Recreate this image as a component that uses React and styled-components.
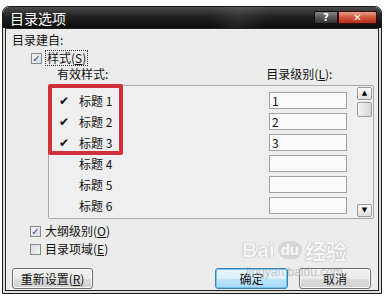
import React from "react";
import styled, { createGlobalStyle } from "styled-components";

const GlobalStyle = createGlobalStyle`
  body {
    margin: 0;
    background: #fff;
    font-family: "Noto Sans CJK SC", "Noto Sans", sans-serif;
    font-size: 12px;
    color: #111;
  }
`;

const levels = [
  { name: "标题 1", checked: true, value: "1" },
  { name: "标题 2", checked: true, value: "2" },
  { name: "标题 3", checked: true, value: "3" },
  { name: "标题 4", checked: false, value: "" },
  { name: "标题 5", checked: false, value: "" },
  { name: "标题 6", checked: false, value: "" },
];

export default function App() {
  return (
    <>
      <GlobalStyle />
      <Window>
        <TitleBar>
          <Title>目录选项</Title>
          <CaptionButtons>
            <HelpButton>?</HelpButton>
            <CloseButton>✕</CloseButton>
          </CaptionButtons>
        </TitleBar>
        <Body>
          <Label>目录建自:</Label>
          <CheckRow $indent={25} $top={4}>
            <Box $checked>✓</Box>
            <FocusText>
              样式(<u>S</u>)
            </FocusText>
          </CheckRow>
          <HeaderRow>
            <span>有效样式:</span>
            <span>
              目录级别(<u>L</u>):
            </span>
          </HeaderRow>
          <ListBox>
            <Rows>
              {levels.map((l) => (
                <Row key={l.name}>
                  <Tick>{l.checked ? "✔" : ""}</Tick>
                  <Name>{l.name}</Name>
                  <LevelInput>{l.value}</LevelInput>
                </Row>
              ))}
            </Rows>
            <ScrollBar>
              <ArrowButton>▲</ArrowButton>
              <Thumb />
              <Track />
              <ArrowButton>▼</ArrowButton>
            </ScrollBar>
            <Highlight />
          </ListBox>
          <CheckRow $indent={24} $top={5}>
            <Box $checked>✓</Box>
            <span>
              大纲级别(<u>O</u>)
            </span>
          </CheckRow>
          <CheckRow $indent={24} $top={4}>
            <Box />
            <span>
              目录项域(<u>E</u>)
            </span>
          </CheckRow>
          <ButtonRow>
            <Button $width={81}>
              重新设置(<u>R</u>)
            </Button>
            <Spacer />
            <Button $width={73} $default>
              确定
            </Button>
            <Button $width={72}>取消</Button>
          </ButtonRow>
          <Watermark>
            <Brand>
              Bai<Paw>du</Paw>经验
            </Brand>
            <Url>jingyan.baidu.com</Url>
          </Watermark>
        </Body>
      </Window>
    </>
  );
}

const Window = styled.div`
  margin: 6px 0 0 2px;
  width: 380px;
  height: 288px;
  box-sizing: border-box;
  border: 1px solid #1a1a1a;
  border-radius: 7px 7px 0 0;
  overflow: hidden;
  background: #dcdcdc;
  display: flex;
  flex-direction: column;
  padding: 0 2px 2px;
`;

const TitleBar = styled.div`
  height: 21px;
  margin: 0 -2px;
  flex: none;
  display: flex;
  align-items: flex-start;
  background:
    linear-gradient(100deg, transparent 55%, rgba(255, 255, 255, 0.08) 62%, transparent 70%),
    linear-gradient(180deg, #4a4a4a 0%, #222 45%, #0c0c0c 100%);
`;

const Title = styled.div`
  flex: 1;
  color: #fff;
  font-size: 14px;
  line-height: 21px;
  padding-left: 7px;
  margin-top: 1px;
`;

const CaptionButtons = styled.div`
  display: flex;
  margin: 4px 4px 0 0;
`;

const HelpButton = styled.div`
  width: 24px;
  height: 13px;
  box-sizing: border-box;
  border: 1px solid #111;
  border-radius: 2px 0 0 2px;
  background: linear-gradient(180deg, #8a8a8a 0%, #555 50%, #333 100%);
  color: #fff;
  font: bold 10px/11px "DejaVu Sans", sans-serif;
  text-align: center;
`;

const CloseButton = styled.div`
  width: 39px;
  height: 13px;
  box-sizing: border-box;
  border: 1px solid #3a0c05;
  border-radius: 0 2px 2px 0;
  background: linear-gradient(180deg, #eba08f 0%, #d2543c 50%, #b3301b 100%);
  color: #fff;
  font: bold 10px/11px "DejaVu Sans", sans-serif;
  text-align: center;
`;

const Body = styled.div`
  position: relative;
  flex: 1;
  border: 1px solid #222;
  background: #ececec;
  display: flex;
  flex-direction: column;
`;

const Label = styled.div`
  line-height: 14px;
  margin: 4px 0 0 6px;
`;

const CheckRow = styled.div`
  display: flex;
  align-items: center;
  gap: 4px;
  line-height: 14px;
  margin: ${(p) => p.$top}px 0 0 ${(p) => p.$indent}px;
`;

const Box = styled.div`
  width: 11px;
  height: 11px;
  box-sizing: border-box;
  border: 1px solid #8a8a8a;
  background: ${(p) =>
    p.$checked
      ? "linear-gradient(135deg, #f4f4f4, #d8dde4)"
      : "linear-gradient(135deg, #dadada, #f6f6f6)"};
  color: #2a4f93;
  font: bold 10px/9px "DejaVu Sans", sans-serif;
  text-align: center;
`;

const FocusText = styled.span`
  outline: 1px dotted #333;
  padding: 0 1px;
`;

const HeaderRow = styled.div`
  display: flex;
  line-height: 14px;
  margin: 2px 0 0 51px;
  span:last-child {
    margin-left: 158px;
  }
`;

const ListBox = styled.div`
  position: relative;
  display: flex;
  width: 326px;
  height: 134px;
  box-sizing: border-box;
  margin: 4px 0 0 42px;
  border: 1px solid #a8a8a8;
  border-radius: 2px;
  background: #efefef;
`;

const Rows = styled.div`
  flex: 1;
  display: flex;
  flex-direction: column;
  gap: 4px;
  padding-top: 6px;
`;

const Row = styled.div`
  display: flex;
  align-items: center;
  height: 17px;
  padding-left: 10px;
`;

const Tick = styled.span`
  width: 20px;
  font: bold 12px "DejaVu Sans", sans-serif;
`;

const Name = styled.span`
  flex: 1;
`;

const LevelInput = styled.div`
  width: 78px;
  height: 17px;
  box-sizing: border-box;
  margin-right: 10px;
  border: 1px solid #a0a0a0;
  background: #fafafa;
  padding-left: 2px;
  line-height: 15px;
`;

const ScrollBar = styled.div`
  width: 15px;
  margin: 1px 1px 1px 0;
  display: flex;
  flex-direction: column;
`;

const ArrowButton = styled.div`
  height: 13px;
  box-sizing: border-box;
  border: 1px solid #9a9a9a;
  border-radius: 2px;
  background: linear-gradient(180deg, #fdfdfd, #dedede);
  font: 7px/11px "DejaVu Sans", sans-serif;
  text-align: center;
  color: #000;
`;

const Thumb = styled.div`
  height: 15px;
  margin-top: 2px;
  box-sizing: border-box;
  border: 1px solid #9a9a9a;
  border-radius: 2px;
  background: linear-gradient(90deg, #f4f4f4, #d6d6d6);
`;

const Track = styled.div`
  flex: 1;
`;

const Highlight = styled.div`
  position: absolute;
  left: -1px;
  top: -2px;
  width: 75px;
  height: 71px;
  box-sizing: border-box;
  border: 4px solid #cf3039;
  border-radius: 2px;
`;

const ButtonRow = styled.div`
  display: flex;
  gap: 11px;
  margin: 12px 7px 0 6px;
`;

const Spacer = styled.div`
  flex: 1;
`;

const Button = styled.div`
  width: ${(p) => p.$width}px;
  height: 21px;
  box-sizing: border-box;
  border: 1px solid ${(p) => (p.$default ? "#3c7fb1" : "#707070")};
  border-radius: 3px;
  background: ${(p) =>
    p.$default
      ? "linear-gradient(180deg, #eaf6fd 0%, #d9f0fc 50%, #bee6fd 51%, #a7d9f5 100%)"
      : "linear-gradient(180deg, #f2f2f2 0%, #ebebeb 50%, #dddddd 51%, #cfcfcf 100%)"};
  box-shadow: ${(p) => (p.$default ? "inset 0 0 0 1px #6fc6f0" : "inset 0 0 0 1px #fafafa")};
  text-align: center;
  line-height: 19px;
`;

const Watermark = styled.div`
  position: absolute;
  left: 236px;
  top: 206px;
  display: flex;
  flex-direction: column;
  align-items: center;
  pointer-events: none;
`;

const Brand = styled.div`
  display: flex;
  align-items: center;
  font: bold 21px "Liberation Sans", "Noto Sans CJK SC", sans-serif;
  color: #f6f6f6;
  text-shadow: 0 0 1px #aaa, 0 0 1px #aaa;
`;

const Paw = styled.span`
  margin: 0 3px;
  padding: 0 3px 1px;
  font-size: 15px;
  border-radius: 9px;
  background: #d6d6d6;
  color: #f6f6f6;
  text-shadow: none;
`;

const Url = styled.div`
  margin-top: 0;
  font: 12px "Liberation Sans", sans-serif;
  color: rgba(180, 180, 180, 0.75);
`;
